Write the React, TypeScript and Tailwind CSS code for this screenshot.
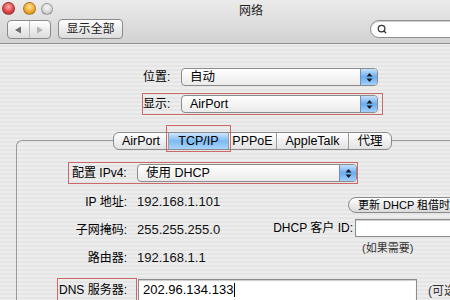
import { Search } from "lucide-react";

const Stepper = () => (
  <span className="flex w-[17px] shrink-0 items-center justify-center rounded-r-[3px] border-l border-[#6f8fb5] bg-gradient-to-b from-[#c6e1fc] via-[#67acf1] to-[#a5d0fa]">
    <svg width="7" height="11" viewBox="0 0 7 11">
      <polygon points="3.5,1 6.5,4.5 0.5,4.5" fill="#1b1b1b" />
      <polygon points="0.5,6.5 6.5,6.5 3.5,10" fill="#1b1b1b" />
    </svg>
  </span>
);

const Popup = ({ text, w }: { text: string; w: string }) => (
  <div className={`flex h-[18px] shrink-0 ${w} rounded-[4px] border border-[#8c8c8c] bg-gradient-to-b from-white to-[#ebebeb]`}>
    <span className="flex-1 pl-[8px] text-[12.5px] leading-[16px] text-black">{text}</span>
    <Stepper />
  </div>
);

const tabs = [
  { name: "AirPort", w: "w-[54px]" },
  { name: "TCP/IP", w: "w-[60px]" },
  { name: "PPPoE", w: "w-[48px]" },
  { name: "AppleTalk", w: "w-[72px]" },
  { name: "代理", w: "w-[43px]" },
];

const Light = ({ color, cls }: { color: string; cls: string }) => (
  <span className={`block rounded-full border border-black/25 ${color} ${cls}`} />
);

export default function App() {
  return (
    <div className="flex h-[300px] w-[450px] flex-col overflow-hidden bg-[#ececec] font-['Liberation_Sans','Noto_Sans_CJK_SC',sans-serif] text-[12.5px] text-black">
      {/* title bar + toolbar */}
      <div className="h-[44px] shrink-0 border-b border-[#8e8e8e] bg-gradient-to-b from-[#ebebeb] to-[#d2d2d2]">
        <div className="flex h-[19px] items-start">
          <div className="flex items-center pl-[2px] pt-[2px]">
            <Light color="bg-[radial-gradient(circle_at_50%_35%,#ffb0ae,#e0464b_55%,#a9262b)]" cls="h-[13px] w-[13px]" />
            <Light color="bg-[radial-gradient(circle_at_50%_35%,#ffe5a3,#f1a92f_55%,#c27a10)]" cls="ml-[8px] h-[13px] w-[13px]" />
            <Light color="bg-[radial-gradient(circle_at_50%_35%,#fafafa,#d4d4d4_60%,#aaaaaa)]" cls="ml-[5px] h-[12px] w-[12px]" />
          </div>
          <span className="ml-[186px] mt-[4px] text-[12px] leading-[14px] text-[#222]">网络</span>
        </div>
        <div className="flex items-start">
          <div className="ml-[7px] mt-[1px] flex h-[19px] w-[44px] shrink-0 overflow-hidden rounded-[4px] border border-[#8a8a8a] bg-gradient-to-b from-white to-[#dcdcdc]">
            <span className="flex flex-1 items-center justify-center border-r border-[#b8b8b8]">
              <svg width="8" height="8" viewBox="0 0 8 8"><polygon points="7,0.5 7,7.5 1,4" fill="#6e6e6e" /></svg>
            </span>
            <span className="flex flex-1 items-center justify-center">
              <svg width="8" height="8" viewBox="0 0 8 8"><polygon points="1,0.5 1,7.5 7,4" fill="#b4b4b4" /></svg>
            </span>
          </div>
          <div className="ml-[7px] flex h-[20px] w-[65px] shrink-0 items-center justify-center rounded-[4px] border border-[#8a8a8a] bg-gradient-to-b from-white to-[#dcdcdc] text-[12px] text-[#222]">
            显示全部
          </div>
          <div className="ml-[247px] mt-[1px] flex h-[18px] w-[90px] shrink-0 items-center rounded-full border border-[#8f8f8f] bg-white pl-[6px] shadow-[inset_0_1px_1px_rgba(0,0,0,0.2)]">
            <Search size={10} strokeWidth={3} className="text-[#333]" />
          </div>
        </div>
      </div>

      {/* content */}
      <div className="flex-1 bg-[repeating-linear-gradient(0deg,#ededed_0px,#ededed_2px,#e5e5e5_2px,#e5e5e5_4px)] pt-[24px]">
        <div className="flex h-[18px] items-center pl-[143px]">
          <span className="w-[38px] shrink-0 text-[12px]">位置:</span>
          <Popup text="自动" w="w-[197px]" />
        </div>
        <div className="ml-[142px] mt-[7px] flex h-[22px] w-[241px] items-center border border-[#c9696a]">
          <span className="w-[38px] shrink-0 text-[12px]">显示:</span>
          <Popup text="AirPort" w="w-[197px]" />
        </div>

        {/* tabs */}
        <div className="relative z-10 mt-[17px] flex pl-[113px]">
          <div className="flex h-[18px] shrink-0 rounded-[6px] border border-[#8a8a8a] bg-gradient-to-b from-white to-[#e2e2e2]">
            {tabs.map((t, i) => (
              <div
                key={t.name}
                className={`relative flex ${t.w} items-center justify-center text-[12.5px] leading-[16px] ${i > 0 ? "border-l border-[#9d9d9d]" : "rounded-l-[5px]"} ${i === tabs.length - 1 ? "rounded-r-[5px]" : ""} ${t.name === "TCP/IP" ? "bg-gradient-to-b from-[#cfe6fd] via-[#7cbaf4] to-[#a9d3fb]" : ""}`}
              >
                {t.name}
                {t.name === "TCP/IP" && (
                  <span className="absolute -bottom-[3px] -left-[3px] -right-[3px] -top-[8px] border border-[#c9696a]" />
                )}
              </div>
            ))}
          </div>
        </div>

        {/* tab panel */}
        <div className="ml-[16px] -mt-[10px] rounded-tl-[6px] border-l border-t border-[#9a9a9a] pt-[21px]">
          <div className="ml-[51px] flex h-[22px] w-[290px] items-center border border-[#c9696a] pl-[3px]">
            <span className="w-[65px] shrink-0 text-[12px]">配置 IPv4:</span>
            <Popup text="使用 DHCP" w="w-[220px]" />
          </div>

          <div className="mt-[9px] flex">
            <div className="flex w-[256px] shrink-0 flex-col gap-[10px]">
              {[
                ["IP 地址:", "192.168.1.101"],
                ["子网掩码:", "255.255.255.0"],
                ["路由器:", "192.168.1.1"],
              ].map(([l, v]) => (
                <div key={l} className="flex h-[18px] items-center">
                  <span className="w-[110px] text-right text-[12px]">{l}</span>
                  <span className="ml-[10px] text-[13px] text-[#111]">{v}</span>
                </div>
              ))}
            </div>
            <div className="flex shrink-0 flex-col pt-[4px]">
              <div className="ml-[75px] flex h-[16px] w-[120px] items-center whitespace-nowrap rounded-full border border-[#8a8a8a] bg-gradient-to-b from-white to-[#dadada] pl-[9px] text-[11px]">
                更新 DHCP 租借时间
              </div>
              <div className="mt-[6px] flex h-[18px] items-center">
                <span className="w-[80px] whitespace-nowrap text-right text-[12px]">DHCP 客户 ID:</span>
                <span className="ml-[2px] h-[18px] w-[100px] border border-[#8c8c8c] bg-white shadow-[inset_0_1px_1px_rgba(0,0,0,0.2)]" />
              </div>
              <span className="ml-[89px] mt-[5px] text-[11px] leading-[12px] text-[#333]">(如果需要)</span>
            </div>
          </div>

          <div className="mt-[11px] flex items-start">
            <div className="ml-[40px] flex h-[24px] w-[80px] shrink-0 items-center justify-end border border-[#c9696a] pr-[9px] text-[12px]">
              DNS 服务器:
            </div>
            <div className="ml-[1px] mt-[1px] flex h-[26px] w-[279px] shrink-0 items-start border border-[#8c8c8c] bg-white pl-[4px] pt-[2px] shadow-[inset_0_1px_1px_rgba(0,0,0,0.2)]">
              <span className="text-[13px] leading-[16px]">202.96.134.133</span>
              <span className="ml-[1px] mt-[1px] h-[14px] w-[1px] bg-black" />
            </div>
            <span className="ml-[11px] mt-[4px] whitespace-nowrap text-[12px] text-[#333]">(可选)</span>
          </div>
        </div>
      </div>
    </div>
  );
}
